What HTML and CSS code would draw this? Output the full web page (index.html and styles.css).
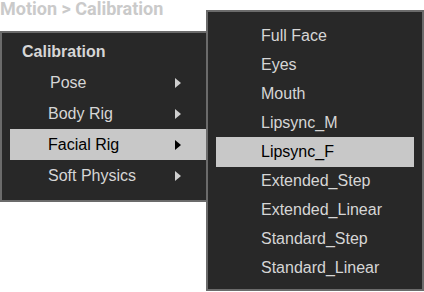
FILE: index.html
```html
<!DOCTYPE html>
<html>
<head>
<meta charset="utf-8">
<link rel="stylesheet" href="styles.css">
</head>
<body>
<div class="crumb">Motion &gt; Calibration</div>
<div class="menu main">
  <div class="title">Calibration</div>
  <div class="item pose"><span>Pose</span><span class="arrow"></span></div>
  <div class="item"><span>Body Rig</span><span class="arrow"></span></div>
  <div class="item active"><span>Facial Rig</span><span class="arrow"></span></div>
  <div class="item"><span>Soft Physics</span><span class="arrow"></span></div>
</div>
<div class="menu sub">
  <div class="item">Full Face</div>
  <div class="item">Eyes</div>
  <div class="item">Mouth</div>
  <div class="item">Lipsync_M</div>
  <div class="item active">Lipsync_F</div>
  <div class="item">Extended_Step</div>
  <div class="item">Extended_Linear</div>
  <div class="item">Standard_Step</div>
  <div class="item">Standard_Linear</div>
</div>
</body>
</html>
```
FILE: styles.css
```css
html, body {
  margin: 0;
  padding: 0;
  background: #ffffff;
  width: 424px;
  height: 292px;
  overflow: hidden;
}
body {
  position: relative;
  font-family: "Liberation Sans", Arial, sans-serif;
}
.crumb {
  font-family: Roboto, "Liberation Sans", sans-serif;
  font-weight: 700;
  font-size: 18px;
  line-height: 16px;
  padding-top: 1px;
  color: #cacaca;
  white-space: nowrap;
}
.menu {
  background: #282828;
  border: 2px solid #6b6b6b;
  box-sizing: border-box;
  color: #d6d6d6;
  font-size: 16px;
}
.main {
  margin-top: 14px;
  width: 216px;
  height: 171px;
  padding: 4px 8px 0 8px;
}
.main .title {
  font-weight: 700;
  height: 30px;
  line-height: 30px;
  padding-left: 12px;
}
.main .item {
  height: 31px;
  line-height: 31px;
  padding: 0 25px 0 38px;
  display: flex;
  align-items: center;
  justify-content: space-between;
}
.main .item.pose {
  padding-left: 40px;
}
.arrow {
  width: 0;
  height: 0;
  border-top: 5px solid transparent;
  border-bottom: 5px solid transparent;
  border-left: 6px solid #cfcfcf;
}
.item.active {
  background: #c8c8c8;
  color: #000000;
}
.item.active .arrow {
  border-left-color: #000000;
}
.sub {
  position: absolute;
  left: 206px;
  top: 10px;
  width: 218px;
  height: 281px;
  padding: 9px 8px 0 8px;
  z-index: 2;
}
.sub .item {
  height: 29px;
  line-height: 29px;
  padding-left: 45px;
  white-space: nowrap;
}
.sub .item.active {
  height: 30px;
  line-height: 30px;
  margin-bottom: -1px;
}
```
